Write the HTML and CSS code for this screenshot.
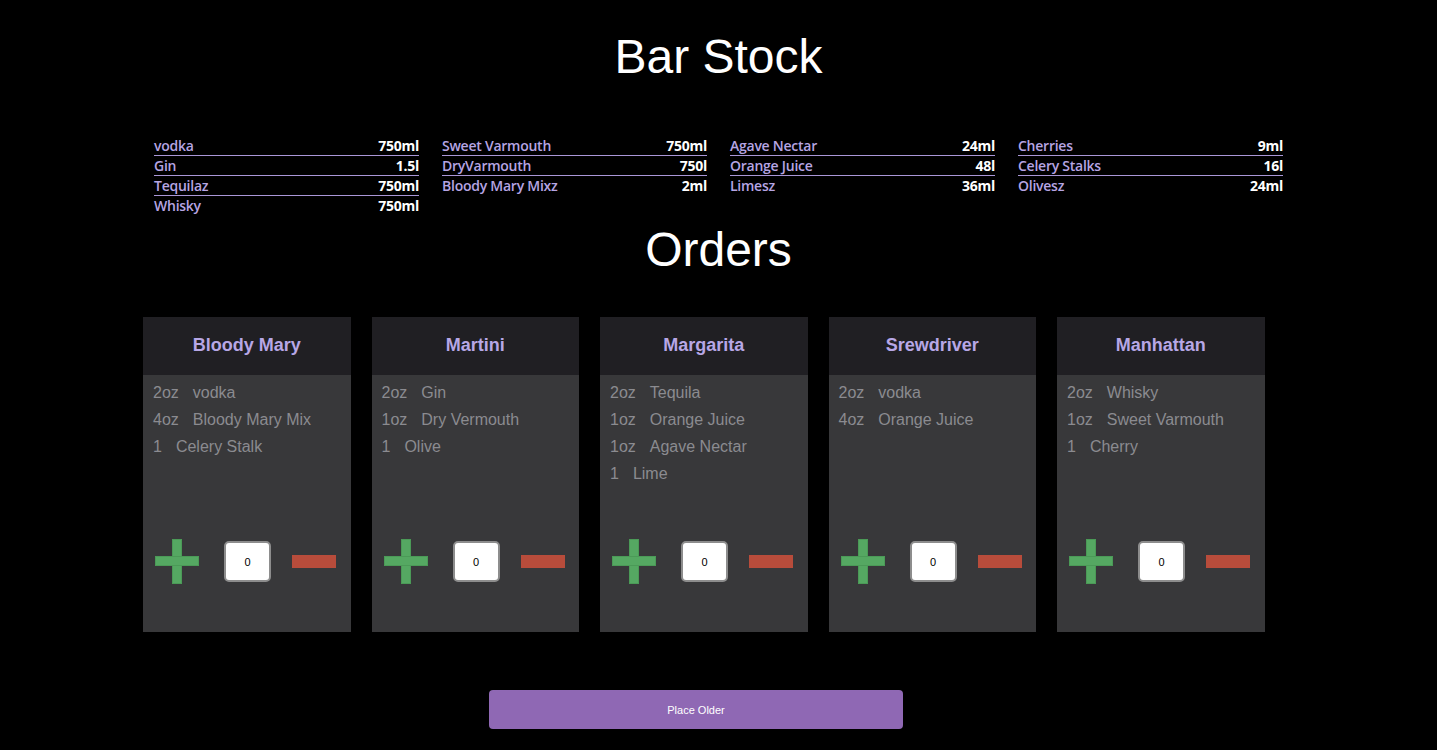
FILE: index.html
```html
<!DOCTYPE html>
<html>
<head>
<meta charset="utf-8">
<title>Bar Stock</title>
<link rel="stylesheet" href="styles.css">
</head>
<body>
<h1 class="title">Bar Stock</h1>
<div class="stock">
  <ul class="stock-col">
    <li><span class="name">vodka</span><span class="qty">750ml</span></li>
    <li><span class="name">Gin</span><span class="qty">1.5l</span></li>
    <li><span class="name">Tequilaz</span><span class="qty">750ml</span></li>
    <li><span class="name">Whisky</span><span class="qty">750ml</span></li>
  </ul>
  <ul class="stock-col">
    <li><span class="name">Sweet Varmouth</span><span class="qty">750ml</span></li>
    <li><span class="name">DryVarmouth</span><span class="qty">750l</span></li>
    <li><span class="name">Bloody Mary Mixz</span><span class="qty">2ml</span></li>
  </ul>
  <ul class="stock-col">
    <li><span class="name">Agave Nectar</span><span class="qty">24ml</span></li>
    <li><span class="name">Orange Juice</span><span class="qty">48l</span></li>
    <li><span class="name">Limesz</span><span class="qty">36ml</span></li>
  </ul>
  <ul class="stock-col">
    <li><span class="name">Cherries</span><span class="qty">9ml</span></li>
    <li><span class="name">Celery Stalks</span><span class="qty">16l</span></li>
    <li><span class="name">Olivesz</span><span class="qty">24ml</span></li>
  </ul>
</div>
<h1 class="title orders-title">Orders</h1>
<div class="cards">
  <div class="card">
    <div class="card-head">Bloody Mary</div>
    <div class="card-body">
      <ul class="ingr">
        <li><span class="amt">2oz</span>vodka</li>
        <li><span class="amt">4oz</span>Bloody Mary Mix</li>
        <li><span class="amt">1</span>Celery Stalk</li>
      </ul>
      <div class="controls">
        <span class="plus"></span>
        <input class="count" type="text" value="0">
        <span class="minus"></span>
      </div>
    </div>
  </div>
  <div class="card">
    <div class="card-head">Martini</div>
    <div class="card-body">
      <ul class="ingr">
        <li><span class="amt">2oz</span>Gin</li>
        <li><span class="amt">1oz</span>Dry Vermouth</li>
        <li><span class="amt">1</span>Olive</li>
      </ul>
      <div class="controls">
        <span class="plus"></span>
        <input class="count" type="text" value="0">
        <span class="minus"></span>
      </div>
    </div>
  </div>
  <div class="card">
    <div class="card-head">Margarita</div>
    <div class="card-body">
      <ul class="ingr">
        <li><span class="amt">2oz</span>Tequila</li>
        <li><span class="amt">1oz</span>Orange Juice</li>
        <li><span class="amt">1oz</span>Agave Nectar</li>
        <li><span class="amt">1</span>Lime</li>
      </ul>
      <div class="controls">
        <span class="plus"></span>
        <input class="count" type="text" value="0">
        <span class="minus"></span>
      </div>
    </div>
  </div>
  <div class="card">
    <div class="card-head">Srewdriver</div>
    <div class="card-body">
      <ul class="ingr">
        <li><span class="amt">2oz</span>vodka</li>
        <li><span class="amt">4oz</span>Orange Juice</li>
      </ul>
      <div class="controls">
        <span class="plus"></span>
        <input class="count" type="text" value="0">
        <span class="minus"></span>
      </div>
    </div>
  </div>
  <div class="card">
    <div class="card-head">Manhattan</div>
    <div class="card-body">
      <ul class="ingr">
        <li><span class="amt">2oz</span>Whisky</li>
        <li><span class="amt">1oz</span>Sweet Varmouth</li>
        <li><span class="amt">1</span>Cherry</li>
      </ul>
      <div class="controls">
        <span class="plus"></span>
        <input class="count" type="text" value="0">
        <span class="minus"></span>
      </div>
    </div>
  </div>
</div>
<div class="actions">
  <button class="place" type="button">Place Older</button>
</div>
</body>
</html>
```

FILE: styles.css
```css
html, body {
  margin: 0;
  padding: 0;
  background: #000;
  color: #fff;
  font-family: "Liberation Sans", Arial, sans-serif;
}

.title {
  margin: 29px 0 0;
  font-size: 48px;
  font-weight: normal;
  line-height: 55px;
  text-align: center;
  color: #fff;
}

.stock {
  display: flex;
  gap: 23px;
  margin: 52px 0 0 154px;
  width: 1129px;
}

.stock-col {
  list-style: none;
  margin: 0;
  padding: 0;
  width: 265px;
  font-family: "Open Sans", sans-serif;
  font-weight: 600;
  font-size: 14px;
  letter-spacing: -0.25px;
}

.stock-col li {
  display: flex;
  justify-content: space-between;
  height: 20px;
  line-height: 19px;
  box-sizing: border-box;
  border-bottom: 1px solid #a996d6;
}

.stock-col li:last-child {
  border-bottom: none;
}

.stock-col .name {
  color: #b6a5e3;
}

.stock-col .qty {
  color: #fff;
  font-weight: 700;
}

.orders-title {
  margin-top: 6px;
}

.cards {
  display: flex;
  gap: 21px;
  margin: 40px 0 0 143px;
}

.card {
  width: 207.5px;
  display: flex;
  flex-direction: column;
}

.card-head {
  height: 58px;
  box-sizing: border-box;
  padding-bottom: 2px;
  background: #201f23;
  color: #b7a7e6;
  font-weight: bold;
  font-size: 18px;
  display: flex;
  align-items: center;
  justify-content: center;
}

.card-body {
  height: 257px;
  background: #38383a;
  display: flex;
  flex-direction: column;
}

.ingr {
  list-style: none;
  margin: 0;
  padding: 4px 0 0 10px;
  font-size: 16px;
  line-height: 27px;
  color: #8b8b90;
}

.amt {
  margin-right: 14px;
}

.controls {
  margin-top: auto;
  margin-bottom: 48px;
  display: flex;
  align-items: center;
  padding-left: 12px;
}

.plus {
  position: relative;
  width: 44px;
  height: 45px;
  flex: none;
}

.plus::before,
.plus::after {
  content: "";
  position: absolute;
  background: #55a862;
  box-shadow: inset 0 0 0 1px #4b9a57;
}

.plus::before {
  left: 17px;
  top: 0;
  width: 10px;
  height: 45px;
}

.plus::after {
  left: 0;
  top: 17px;
  width: 44px;
  height: 10px;
}

.count {
  margin-left: 25px;
  width: 47px;
  height: 41px;
  box-sizing: border-box;
  border: 2px solid #8d8d8d;
  border-radius: 5px;
  background: #fff;
  text-align: center;
  font-family: "Liberation Sans", Arial, sans-serif;
  font-size: 11px;
  color: #000;
  padding: 0;
}

.minus {
  margin-left: 21px;
  width: 44px;
  height: 13px;
  background: #b84c3b;
  flex: none;
}

.actions {
  margin: 58px 0 0 489px;
}

.place {
  width: 414px;
  height: 39px;
  border: none;
  border-radius: 4px;
  background: #8f68b4;
  color: #fff;
  font-family: "Liberation Sans", Arial, sans-serif;
  font-size: 11px;
}
```
